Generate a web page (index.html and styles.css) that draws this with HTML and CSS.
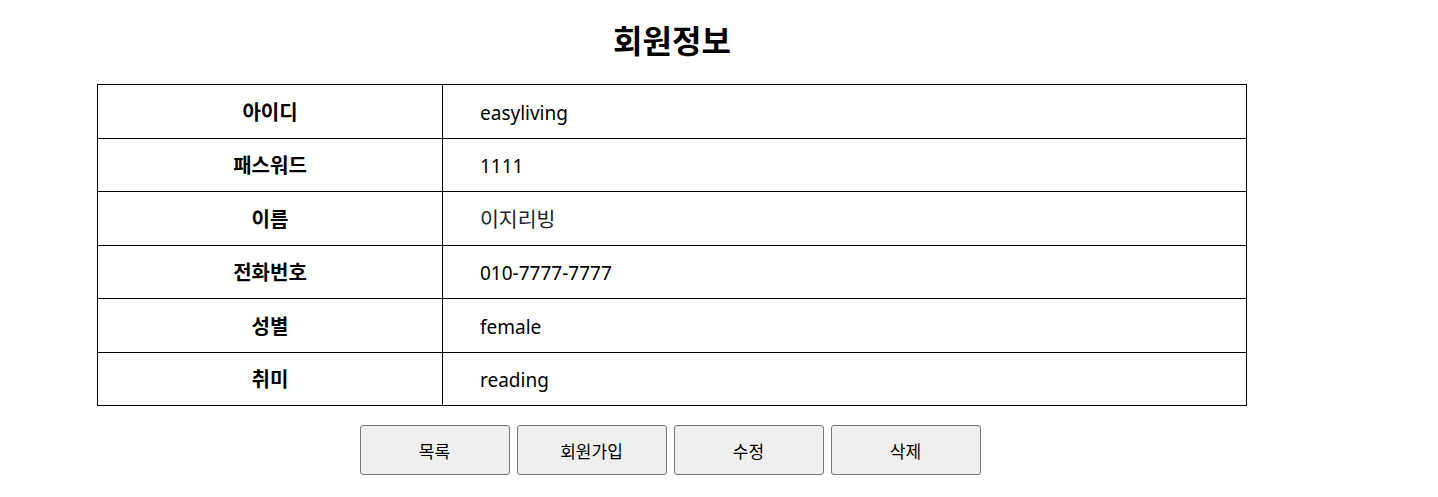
FILE: index.html
```html
<!DOCTYPE html>
<html lang="ko">
<head>
<meta charset="utf-8">
<title>회원정보</title>
<link rel="stylesheet" href="styles.css">
</head>
<body>
<div class="wrap">
  <h1 class="title">회원정보</h1>
  <table class="info">
    <tr><th>아이디</th><td>easyliving</td></tr>
    <tr><th>패스워드</th><td>1111</td></tr>
    <tr><th>이름</th><td><span class="ko">이지리빙</span></td></tr>
    <tr><th>전화번호</th><td>010-7777-7777</td></tr>
    <tr><th>성별</th><td>female</td></tr>
    <tr><th>취미</th><td>reading</td></tr>
  </table>
  <div class="btns">
    <button class="btn">목록</button>
    <button class="btn">회원가입</button>
    <button class="btn">수정</button>
    <button class="btn">삭제</button>
  </div>
</div>
</body>
</html>
```

FILE: styles.css
```css
html, body { margin: 0; padding: 0; background: #fff; }
body {
  font-family: "Noto Sans", "Noto Sans CJK KR", sans-serif;
  color: #000;
}
.wrap {
  width: 1150px;
  margin-left: 97px;
  padding-top: 20px;
}
.title {
  margin: 0 0 22px 0;
  text-align: center;
  font-size: 32px;
  font-weight: 700;
  line-height: 42px;
}
.info {
  width: 1150px;
  border-collapse: collapse;
}
.info th, .info td {
  border: 1px solid #000;
  height: 53.5px;
  padding: 3px 0 0 0;
  font-size: 19px;
  line-height: 24px;
  box-sizing: border-box;
}
.info th {
  width: 345px;
  text-align: center;
  font-weight: 700;
  font-size: 20px;
}
.info td {
  text-align: left;
  padding-left: 37px;
  font-weight: 400;
}
.ko {
  font-size: 20.5px;
  color: #222;
}
.btns {
  display: flex;
  justify-content: center;
  gap: 7px;
  margin-top: 19px;
  padding-right: 4px;
}
.btn {
  width: 150px;
  height: 50px;
  background: #efefef;
  border: 1px solid #767676;
  border-radius: 3px;
  font-family: "Noto Sans", "Noto Sans CJK KR", sans-serif;
  font-size: 17px;
  color: #000;
  padding: 0;
}
```
